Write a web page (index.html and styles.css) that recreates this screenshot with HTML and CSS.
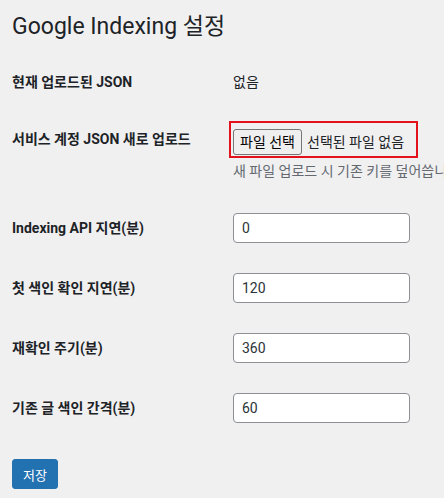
FILE: index.html
```html
<!DOCTYPE html>
<html lang="ko">
<head>
  <meta charset="UTF-8" />
  <meta name="viewport" content="width=device-width, initial-scale=1.0"/>
  <title>Google Indexing 설정</title>
  <link rel="stylesheet" href="styles.css">
</head>
<body>
  <div class="wrap">
    <h1>Google Indexing 설정</h1>

    <form class="form-table">
      <div class="row row-info">
        <div class="label">현재 업로드된 JSON</div>
        <div class="field">없음</div>
      </div>

      <div class="row row-upload">
        <div class="label">서비스 계정 JSON 새로 업로드</div>
        <div class="field">
          <div class="highlight">
            <span class="file-btn">파일 선택</span>
            <span class="file-name">선택된 파일 없음</span>
          </div>
          <p class="description">새 파일 업로드 시 기존 키를 덮어씁니다.</p>
        </div>
      </div>

      <div class="row row-input">
        <div class="label">Indexing API 지연(분)</div>
        <div class="field"><input class="text-input" type="text" value="0"></div>
      </div>

      <div class="row row-input">
        <div class="label">첫 색인 확인 지연(분)</div>
        <div class="field"><input class="text-input" type="text" value="120"></div>
      </div>

      <div class="row row-input">
        <div class="label">재확인 주기(분)</div>
        <div class="field"><input class="text-input" type="text" value="360"></div>
      </div>

      <div class="row row-input">
        <div class="label">기존 글 색인 간격(분)</div>
        <div class="field"><input class="text-input" type="text" value="60"></div>
      </div>

      <button class="btn-primary" type="button">저장</button>
    </form>
  </div>
</body>
</html>
```

FILE: styles.css
```css
html, body {
  margin: 0;
  padding: 0;
  overflow: hidden;
}
body {
  background: #f0f0f1;
  color: #1d2327;
  font-family: Roboto, 'Noto Sans CJK KR', sans-serif;
  font-size: 14px;
  min-height: 100vh;
}
.wrap {
  padding: 0 0 0 12px;
}
h1 {
  margin: 0;
  padding-top: 12px;
  font-size: 23px;
  line-height: 30px;
  font-weight: 400;
}
.form-table {
  display: flex;
  flex-direction: column;
}
.row {
  display: flex;
  align-items: flex-start;
}
.label {
  width: 221px;
  flex: none;
  font-weight: 700;
  line-height: 18px;
}
.field {
  line-height: 18px;
}
.row-info {
  margin-top: 31px;
}
.row-upload {
  margin-top: 30px;
}
.row-upload .label {
  margin-top: 9px;
}
.row-upload .field {
  margin-left: -4px;
}
.highlight {
  display: flex;
  align-items: center;
  width: 179px;
  border: 2px solid #e3111b;
  padding: 6px 4px 1px 2px;
  white-space: nowrap;
}
.file-btn {
  display: inline-block;
  height: 24px;
  line-height: 24px;
  padding: 0 6px;
  background: #efefef;
  border: 1px solid #767676;
  border-radius: 3px;
  color: #000;
}
.file-name {
  margin-left: 5px;
}
.description {
  margin: 4px 0 0 4px;
  color: #646970;
  white-space: nowrap;
}
.row-input {
  align-items: center;
  height: 30px;
  margin-top: 30px;
}
.row-upload + .row-input {
  margin-top: 33px;
}
.text-input {
  box-sizing: border-box;
  width: 177px;
  height: 30px;
  margin: 0;
  padding: 0 8px;
  border: 1px solid #8c8f94;
  border-radius: 4px;
  background: #fff;
  color: #2c3338;
  font-family: inherit;
  font-size: 14px;
}
.btn-primary {
  align-self: flex-start;
  margin-top: 36px;
  height: 30px;
  padding: 0 10px;
  background: #2271b1;
  border: 1px solid #2271b1;
  border-radius: 3px;
  color: #fff;
  font-family: inherit;
  font-size: 13px;
  cursor: pointer;
}
```
